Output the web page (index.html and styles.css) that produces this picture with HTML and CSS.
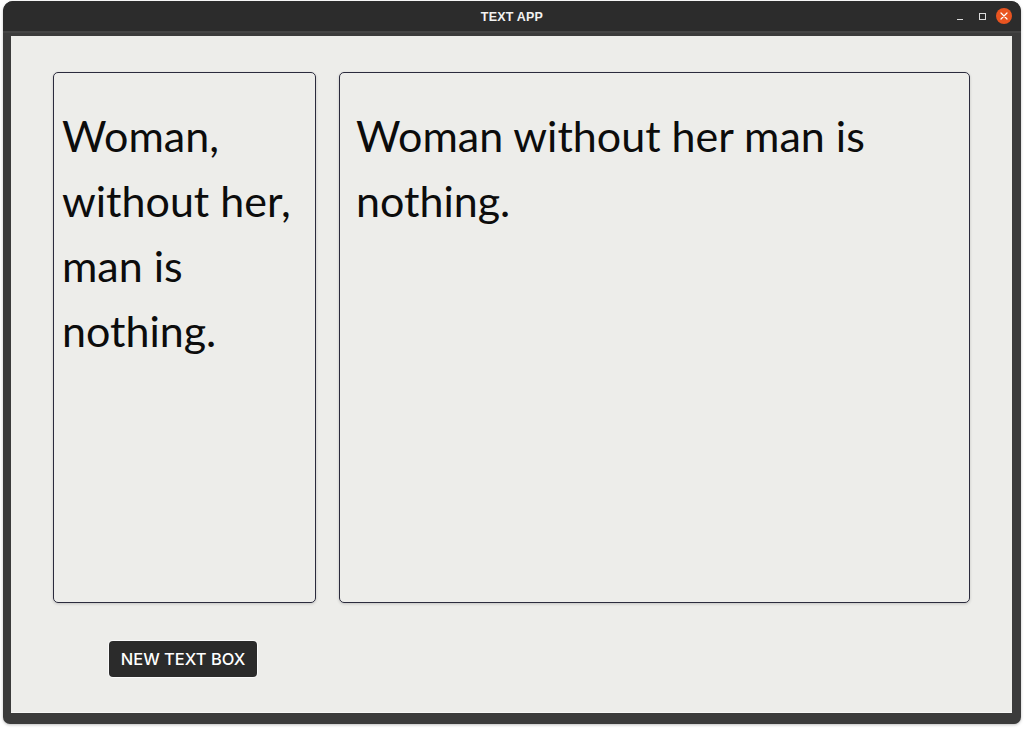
FILE: index.html
```html
<!DOCTYPE html>
<html>
<head>
<meta charset="utf-8">
<link rel="stylesheet" href="styles.css">
</head>
<body>
<div class="window">
  <div class="titlebar">
    <span class="title">TEXT APP</span>
    <div class="controls">
      <span class="ctl min"></span>
      <span class="ctl max"></span>
      <span class="ctl close">
        <svg width="8" height="8" viewBox="0 0 8 8"><path d="M1 1L7 7M7 1L1 7" stroke="#fff" stroke-width="1.2" stroke-linecap="round"/></svg>
      </span>
    </div>
  </div>
  <div class="frame">
    <div class="content">
      <div class="boxes">
        <div class="box box-left">Woman, without her, man is nothing.</div>
        <div class="box box-right">Woman without her man is nothing.</div>
      </div>
      <div class="actions">
        <button class="btn">NEW TEXT BOX</button>
      </div>
    </div>
  </div>
</div>
</body>
</html>
```

FILE: styles.css
```css
html, body {
  margin: 0;
  padding: 0;
  background: #ffffff;
}
body {
  width: 1024px;
  height: 730px;
  overflow: hidden;
}
.window {
  margin: 1px 0 0 3px;
  width: 1018px;
  height: 723px;
  display: flex;
  flex-direction: column;
  border-radius: 10px 10px 7px 7px;
  overflow: hidden;
  background: #3b3b3b;
  box-shadow: 0 1px 3px rgba(0,0,0,0.25);
}
.titlebar {
  box-sizing: border-box;
  height: 32px;
  flex: 0 0 32px;
  padding-top: 1px;
  background: #2c2c2c;
  border-bottom: 2px solid #444444;
  position: relative;
  display: flex;
  align-items: center;
  justify-content: center;
}
.title {
  color: #f2f2f2;
  font-family: "Liberation Sans", Arial, sans-serif;
  font-weight: bold;
  font-size: 12.5px;
  letter-spacing: 0.2px;
}
.controls {
  position: absolute;
  right: 9px;
  top: 7px;
  display: flex;
  align-items: center;
  gap: 6px;
}
.ctl {
  width: 16px;
  height: 16px;
  display: flex;
  align-items: center;
  justify-content: center;
  position: relative;
}
.min::after {
  content: "";
  width: 6px;
  height: 1px;
  background: #dcdcdc;
  position: absolute;
  top: 11px;
  left: 5px;
}
.max::after {
  content: "";
  width: 5px;
  height: 5px;
  border: 1px solid #dcdcdc;
  position: absolute;
  top: 5px;
  left: 5px;
}
.close {
  background: #e95420;
  border-radius: 50%;
}
.frame {
  flex: 1;
  padding: 3px 9px 11px 8px;
  display: flex;
}
.content {
  flex: 1;
  background: #ededea;
  border-bottom: 1px solid #f7f7f5;
  display: flex;
  flex-direction: column;
  padding: 36px 42px 0 42px;
}
.boxes {
  display: flex;
  gap: 23px;
  height: 531px;
}
.box {
  box-sizing: border-box;
  height: 531px;
  border: 1px solid #2b2b3d;
  border-radius: 5px;
  box-shadow: 0 1px 3px rgba(0,0,0,0.18);
  font-family: Lato, "Open Sans", sans-serif;
  font-size: 43px;
  line-height: 65px;
  color: #0c0c0c;
  padding-top: 30px;
}
.box-left {
  width: 263px;
  padding-left: 8px;
  padding-right: 4px;
}
.box-right {
  width: 631px;
  padding-left: 16px;
}
.actions {
  padding: 38px 0 0 56px;
}
.btn {
  width: 148px;
  height: 36px;
  background: #2b2b2b;
  color: #ffffff;
  border: none;
  border-radius: 4px;
  box-shadow: 0 0 0 1px #fafafa;
  font-family: Inter, "Noto Sans", sans-serif;
  font-size: 16.5px;
  font-weight: 500;
  padding: 0;
}
```
